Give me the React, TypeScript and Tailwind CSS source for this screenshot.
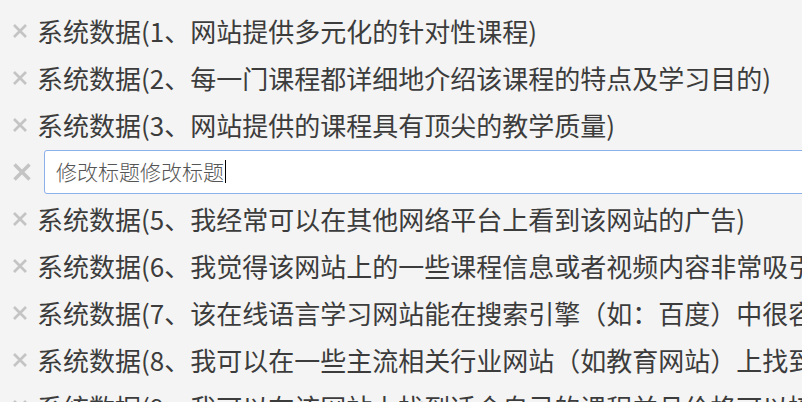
const rows = [
  '系统数据(1、网站提供多元化的针对性课程)',
  '系统数据(2、每一门课程都详细地介绍该课程的特点及学习目的)',
  '系统数据(3、网站提供的课程具有顶尖的教学质量)',
  null,
  '系统数据(5、我经常可以在其他网络平台上看到该网站的广告)',
  '系统数据(6、我觉得该网站上的一些课程信息或者视频内容非常吸引我)',
  '系统数据(7、该在线语言学习网站能在搜索引擎（如：百度）中很容易找到)',
  '系统数据(8、我可以在一些主流相关行业网站（如教育网站）上找到该网站的链接)',
  '系统数据(9、我可以在该网站上找到适合自己的课程并且价格可以接受)',
]

function CloseIcon({ big }: { big?: boolean }) {
  return (
    <svg
      viewBox="0 0 16 16"
      className={big ? 'h-5 w-5 shrink-0' : 'h-4 w-4 shrink-0'}
      fill="none"
      stroke="#c4c4c4"
      strokeWidth={big ? 2.8 : 2.7}
      strokeLinecap="butt"
    >
      <path d="M2 2 L14 14 M14 2 L2 14" />
    </svg>
  )
}

export default function App() {
  return (
    <div
      className="h-[402px] w-[802px] overflow-hidden bg-[#f4f4f4] pt-[7px]"
      style={{ fontFamily: '"Noto Sans CJK SC", "Noto Sans", sans-serif' }}
    >
      {rows.map((text, i) =>
        text === null ? (
          // row being edited
          <div key={i} className="flex h-[47px] items-center gap-3 pl-3">
            <CloseIcon big />
            <div className="flex h-11 w-[800px] shrink-0 items-center rounded-[3px] border border-[#8cb0ea] bg-white pl-[11px] text-[21px] font-light text-[#555]">
              修改标题修改标题
              <span className="ml-[1px] inline-block h-[23px] w-px bg-black" />
            </div>
          </div>
        ) : (
          <div key={i} className="flex h-[47px] items-center gap-[9px] whitespace-nowrap pl-3">
            <CloseIcon />
            <span className="text-[26px] leading-none text-[#3c3c3c]">{text}</span>
          </div>
        )
      )}
    </div>
  )
}
